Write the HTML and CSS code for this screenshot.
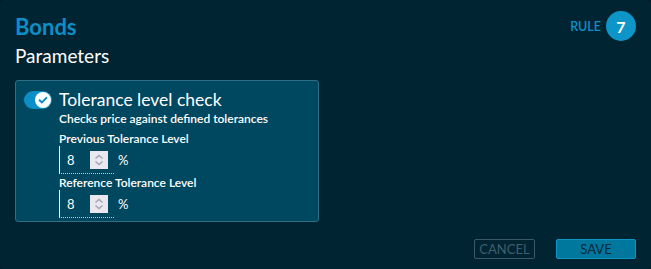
FILE: index.html
```html
<!DOCTYPE html>
<html>
<head>
<meta charset="utf-8">
<link rel="stylesheet" href="styles.css">
</head>
<body>
<div class="dialog">
  <header class="head">
    <div class="titles">
      <h1 class="title">Bonds</h1>
      <h2 class="subtitle">Parameters</h2>
    </div>
    <div class="rule">
      <span class="rule-label">RULE</span>
      <span class="rule-num">7</span>
    </div>
  </header>
  <section class="panel">
    <div class="check-row">
      <span class="toggle">
        <span class="knob">
          <svg width="14" height="14" viewBox="0 0 14 14"><path d="M3.6 7.2 L6 9.4 L10.4 4.9" fill="none" stroke="#0a8ec4" stroke-width="2" stroke-linecap="round" stroke-linejoin="round"/></svg>
        </span>
      </span>
      <div class="check-body">
        <div class="check-title">Tolerance level check</div>
        <div class="check-desc">Checks price against defined tolerances</div>
        <div class="field-label first">Previous Tolerance Level</div>
        <div class="field">
          <div class="input">
            <span class="val">8</span>
            <span class="spin">
              <svg width="18" height="18" viewBox="0 0 18 18"><path d="M5.5 7.5 L9 4.5 L12.5 7.5" fill="none" stroke="#a4a4b4" stroke-width="1.4"/><path d="M5.5 10.5 L9 13.5 L12.5 10.5" fill="none" stroke="#a4a4b4" stroke-width="1.4"/></svg>
            </span>
          </div>
          <span class="unit">%</span>
        </div>
        <div class="field-label">Reference Tolerance Level</div>
        <div class="field">
          <div class="input">
            <span class="val">8</span>
            <span class="spin">
              <svg width="18" height="18" viewBox="0 0 18 18"><path d="M5.5 7.5 L9 4.5 L12.5 7.5" fill="none" stroke="#a4a4b4" stroke-width="1.4"/><path d="M5.5 10.5 L9 13.5 L12.5 10.5" fill="none" stroke="#a4a4b4" stroke-width="1.4"/></svg>
            </span>
          </div>
          <span class="unit">%</span>
        </div>
      </div>
    </div>
  </section>
  <footer class="actions">
    <button class="btn cancel">CANCEL</button>
    <button class="btn save">SAVE</button>
  </footer>
</div>
</body>
</html>
```
FILE: styles.css
```css
* { box-sizing: border-box; }
html, body { margin: 0; padding: 0; background: #001c28; }
body { font-family: "Lato", "Liberation Sans", sans-serif; color: #fff; }
.dialog {
  width: 651px; height: 269px;
  background: #012432;
  border-radius: 4px;
  padding: 11px 15px 0 15px;
  display: flex; flex-direction: column;
}
.head { display: flex; justify-content: space-between; align-items: flex-start; }
.title { margin: 3px 0 0 0; font-size: 22px; font-weight: 700; color: #0e8ec6; line-height: 26px; }
.subtitle { margin: 4px 0 0 0; font-size: 19px; font-weight: 400; color: #fff; line-height: 24px; }
.rule { display: flex; align-items: center; gap: 5px; }
.rule-label { color: #0e8ec6; font-size: 12.5px; font-weight: 600; }
.rule-num {
  width: 30px; height: 30px; border-radius: 50%;
  background: #0e95c8; color: #fff; font-weight: 700; font-size: 16px;
  display: flex; align-items: center; justify-content: center;
}
.panel {
  margin-top: 12px;
  width: 304px; height: 142px;
  background: #004760;
  border: 1px solid #2f6f86;
  border-radius: 3px;
  padding: 9px 8px 0 8px;
}
.check-row { display: flex; gap: 7px; }
.toggle {
  width: 28px; height: 18px; margin-top: 1px; border-radius: 9px;
  background: #0b8fc6; display: flex; justify-content: flex-end; align-items: center; padding-right: 1px;
  flex: none;
}
.knob {
  width: 16px; height: 16px; border-radius: 50%; background: #fff;
  display: flex; align-items: center; justify-content: center;
}
.check-title { font-size: 17.5px; line-height: 20px; }
.check-desc { font-size: 12px; font-weight: 600; line-height: 14px; margin-top: 2px; }
.field-label { font-size: 12px; font-weight: 600; line-height: 14px; margin-top: 2px; }
.field-label.first { margin-top: 6px; }
.field { display: flex; align-items: center; }
.input {
  width: 55px; height: 28px;
  border-left: 1px solid #fff;
  border-bottom: 1px dotted #b9cbd3;
  display: flex; align-items: center; padding-left: 7px;
}
.val { font-size: 13px; width: 23px; }
.spin { width: 18px; height: 18px; background: #e8e8ee; display: flex; align-items: center; justify-content: center; }
.unit { font-size: 13px; margin-left: 4px; }
.actions { margin-top: auto; margin-bottom: 10px; display: flex; justify-content: flex-end; gap: 21px; }
.btn { font-family: inherit; font-size: 13px; height: 20px; padding: 0; border-radius: 2px; line-height: 18px; }
.cancel { width: 61px; background: transparent; border: 1px solid #3a5866; color: #3f5f6c; }
.save { width: 80px; background: #00789e; border: 1px solid #0a98c6; color: #062636; }
```
